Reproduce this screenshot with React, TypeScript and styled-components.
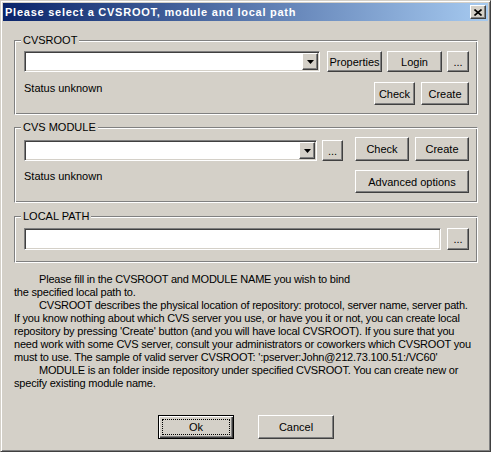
import styled, { createGlobalStyle, css } from "styled-components";

const GlobalStyle = createGlobalStyle`
  html, body {
    margin: 0;
    padding: 0;
    background: #d4d0c8;
  }
  * {
    box-sizing: border-box;
  }
`;

const raised = css`
  border: 1px solid;
  border-color: #ffffff #404040 #404040 #ffffff;
  box-shadow: inset -1px -1px #808080, inset 1px 1px #d4d0c8;
  background: #d4d0c8;
`;

const sunken = css`
  border: 1px solid;
  border-color: #808080 #ffffff #ffffff #808080;
  box-shadow: inset 1px 1px #404040, inset -1px -1px #d4d0c8;
  background: #ffffff;
`;

const Window = styled.div`
  width: 491px;
  height: 452px;
  padding: 2px;
  border: 1px solid;
  border-color: #d4d0c8 #404040 #404040 #d4d0c8;
  box-shadow: inset 1px 1px #ffffff, inset -1px -1px #808080;
  background: #d4d0c8;
  display: flex;
  flex-direction: column;
  font-family: "Liberation Sans", Arial, sans-serif;
  font-size: 11px;
  color: #000;
`;

const TitleBar = styled.div`
  height: 18px;
  display: flex;
  align-items: center;
  justify-content: space-between;
  padding: 0 2px 0 2px;
  background: linear-gradient(to right, #0a246a, #a6caf0);
`;

const TitleText = styled.span`
  color: #ffffff;
  font-weight: bold;
  font-size: 11px;
  letter-spacing: 0.75px;
  white-space: nowrap;
`;

const CloseButton = styled.div`
  ${raised};
  width: 16px;
  height: 14px;
  display: flex;
  align-items: center;
  justify-content: center;
`;

const Content = styled.div`
  flex: 1;
  display: flex;
  flex-direction: column;
  padding: 0 10px 0 11px;
`;

const Group = styled.div<{ $gap: number }>`
  position: relative;
  border: 1px solid;
  border-color: #808080 #ffffff #ffffff #808080;
  box-shadow: inset 1px 1px #ffffff, inset -1px -1px #808080;
  margin-top: ${(p) => p.$gap}px;
  display: flex;
  flex-direction: column;
`;

const Caption = styled.span`
  position: absolute;
  top: -7px;
  left: 6px;
  padding: 0 2px;
  line-height: 13px;
  background: #d4d0c8;
  white-space: nowrap;
`;

const Row = styled.div<{ $top?: number; $align?: string }>`
  display: flex;
  align-items: ${(p) => p.$align || "center"};
  margin-top: ${(p) => p.$top || 0}px;
`;

const Status = styled.span`
  flex: 1;
  align-self: flex-start;
  line-height: 13px;
`;

const Combo = styled.div<{ $w: number }>`
  ${sunken};
  width: ${(p) => p.$w}px;
  height: 21px;
  padding: 1px;
  display: flex;
  justify-content: flex-end;
`;

const DropButton = styled.div`
  ${raised};
  width: 16px;
  height: 100%;
  display: flex;
  align-items: center;
  justify-content: center;
`;

const Field = styled.div<{ $w: number; $h: number }>`
  ${sunken};
  width: ${(p) => p.$w}px;
  height: ${(p) => p.$h}px;
`;

const Button = styled.div<{ $w: number; $h: number; $ml?: number }>`
  ${raised};
  width: ${(p) => p.$w}px;
  height: ${(p) => p.$h}px;
  margin-left: ${(p) => p.$ml || 0}px;
  display: flex;
  align-items: center;
  justify-content: center;
  white-space: nowrap;
  flex-shrink: 0;
`;

const DefaultButton = styled.div<{ $w: number; $h: number }>`
  width: ${(p) => p.$w}px;
  height: ${(p) => p.$h}px;
  border: 1px solid #000000;
  box-shadow: inset 1px 1px #ffffff, inset -1px -1px #404040,
    inset -2px -2px #808080;
  background: #d4d0c8;
  padding: 3px;
  display: flex;
`;

const FocusRect = styled.div`
  flex: 1;
  border: 1px dotted #000000;
  display: flex;
  align-items: center;
  justify-content: center;
`;

const Help = styled.div`
  margin-top: 10px;
  line-height: 13px;
  letter-spacing: -0.2px;
`;

const Line = styled.div<{ $indent?: boolean }>`
  white-space: nowrap;
  padding-left: ${(p) => (p.$indent ? 25 : 0)}px;
`;

const Footer = styled.div`
  display: flex;
  justify-content: center;
  gap: 24px;
  margin-top: 25px;
`;

const Arrow = () => (
  <svg width="7" height="4" viewBox="0 0 7 4">
    <polygon points="0,0 7,0 3.5,4" fill="#000" />
  </svg>
);

const CloseX = () => (
  <svg width="8" height="7" viewBox="0 0 8 7">
    <path d="M0.5 0.5 L7.5 6.5 M7.5 0.5 L0.5 6.5" stroke="#000" strokeWidth="1.6" />
  </svg>
);

const helpLines: [string, boolean][] = [
  ["Please fill in the CVSROOT and MODULE NAME you wish to bind", true],
  ["the specified local path to.", false],
  ["CVSROOT describes the physical location of repository: protocol, server name, server path.", true],
  ["If you know nothing about which CVS server you use, or have you it or not, you can create local", false],
  ["repository by pressing 'Create' button (and you will have local CVSROOT). If you sure that you", false],
  ["need work with some CVS server, consult your administrators or coworkers which CVSROOT you", false],
  ["must to use. The sample of valid server CVSROOT: ':pserver:John@212.73.100.51:/VC60'", false],
  ["MODULE is an folder inside repository under specified CVSROOT. You can create new or", true],
  ["specify existing module name.", false],
];

export default function App() {
  return (
    <>
      <GlobalStyle />
      <Window>
        <TitleBar>
          <TitleText>Please select a CVSROOT, module and local path</TitleText>
          <CloseButton>
            <CloseX />
          </CloseButton>
        </TitleBar>
        <Content>
          <Group $gap={19} style={{ padding: "10px 8px 9px 9px" }}>
            <Caption>CVSROOT</Caption>
            <Row>
              <Combo $w={296}>
                <DropButton>
                  <Arrow />
                </DropButton>
              </Combo>
              <Button $w={55} $h={21} $ml={7}>Properties</Button>
              <Button $w={55} $h={21} $ml={5}>Login</Button>
              <Button $w={22} $h={21} $ml={5}>...</Button>
            </Row>
            <Row $top={10}>
              <Status>Status unknown</Status>
              <Button $w={41} $h={23}>Check</Button>
              <Button $w={48} $h={23} $ml={6}>Create</Button>
            </Row>
          </Group>

          <Group $gap={12} style={{ padding: "9px 8px 9px 9px" }}>
            <Caption>CVS MODULE</Caption>
            <Row $align="flex-end">
              <Combo $w={294}>
                <DropButton>
                  <Arrow />
                </DropButton>
              </Combo>
              <Button $w={21} $h={21} $ml={5}>...</Button>
              <Button $w={54} $h={24} $ml={12}>Check</Button>
              <Button $w={54} $h={24} $ml={6}>Create</Button>
            </Row>
            <Row $top={9}>
              <Status>Status unknown</Status>
              <Button $w={114} $h={23}>Advanced options</Button>
            </Row>
          </Group>

          <Group $gap={13} style={{ padding: "11px 8px 12px 9px" }}>
            <Caption>LOCAL PATH</Caption>
            <Row>
              <Field $w={417} $h={22} />
              <Button $w={22} $h={22} $ml={6}>...</Button>
            </Row>
          </Group>

          <Help>
            {helpLines.map(([text, indent], i) => (
              <Line key={i} $indent={indent}>
                {text}
              </Line>
            ))}
          </Help>

          <Footer>
            <DefaultButton $w={76} $h={24}>
              <FocusRect>Ok</FocusRect>
            </DefaultButton>
            <Button $w={76} $h={24}>Cancel</Button>
          </Footer>
        </Content>
      </Window>
    </>
  );
}
